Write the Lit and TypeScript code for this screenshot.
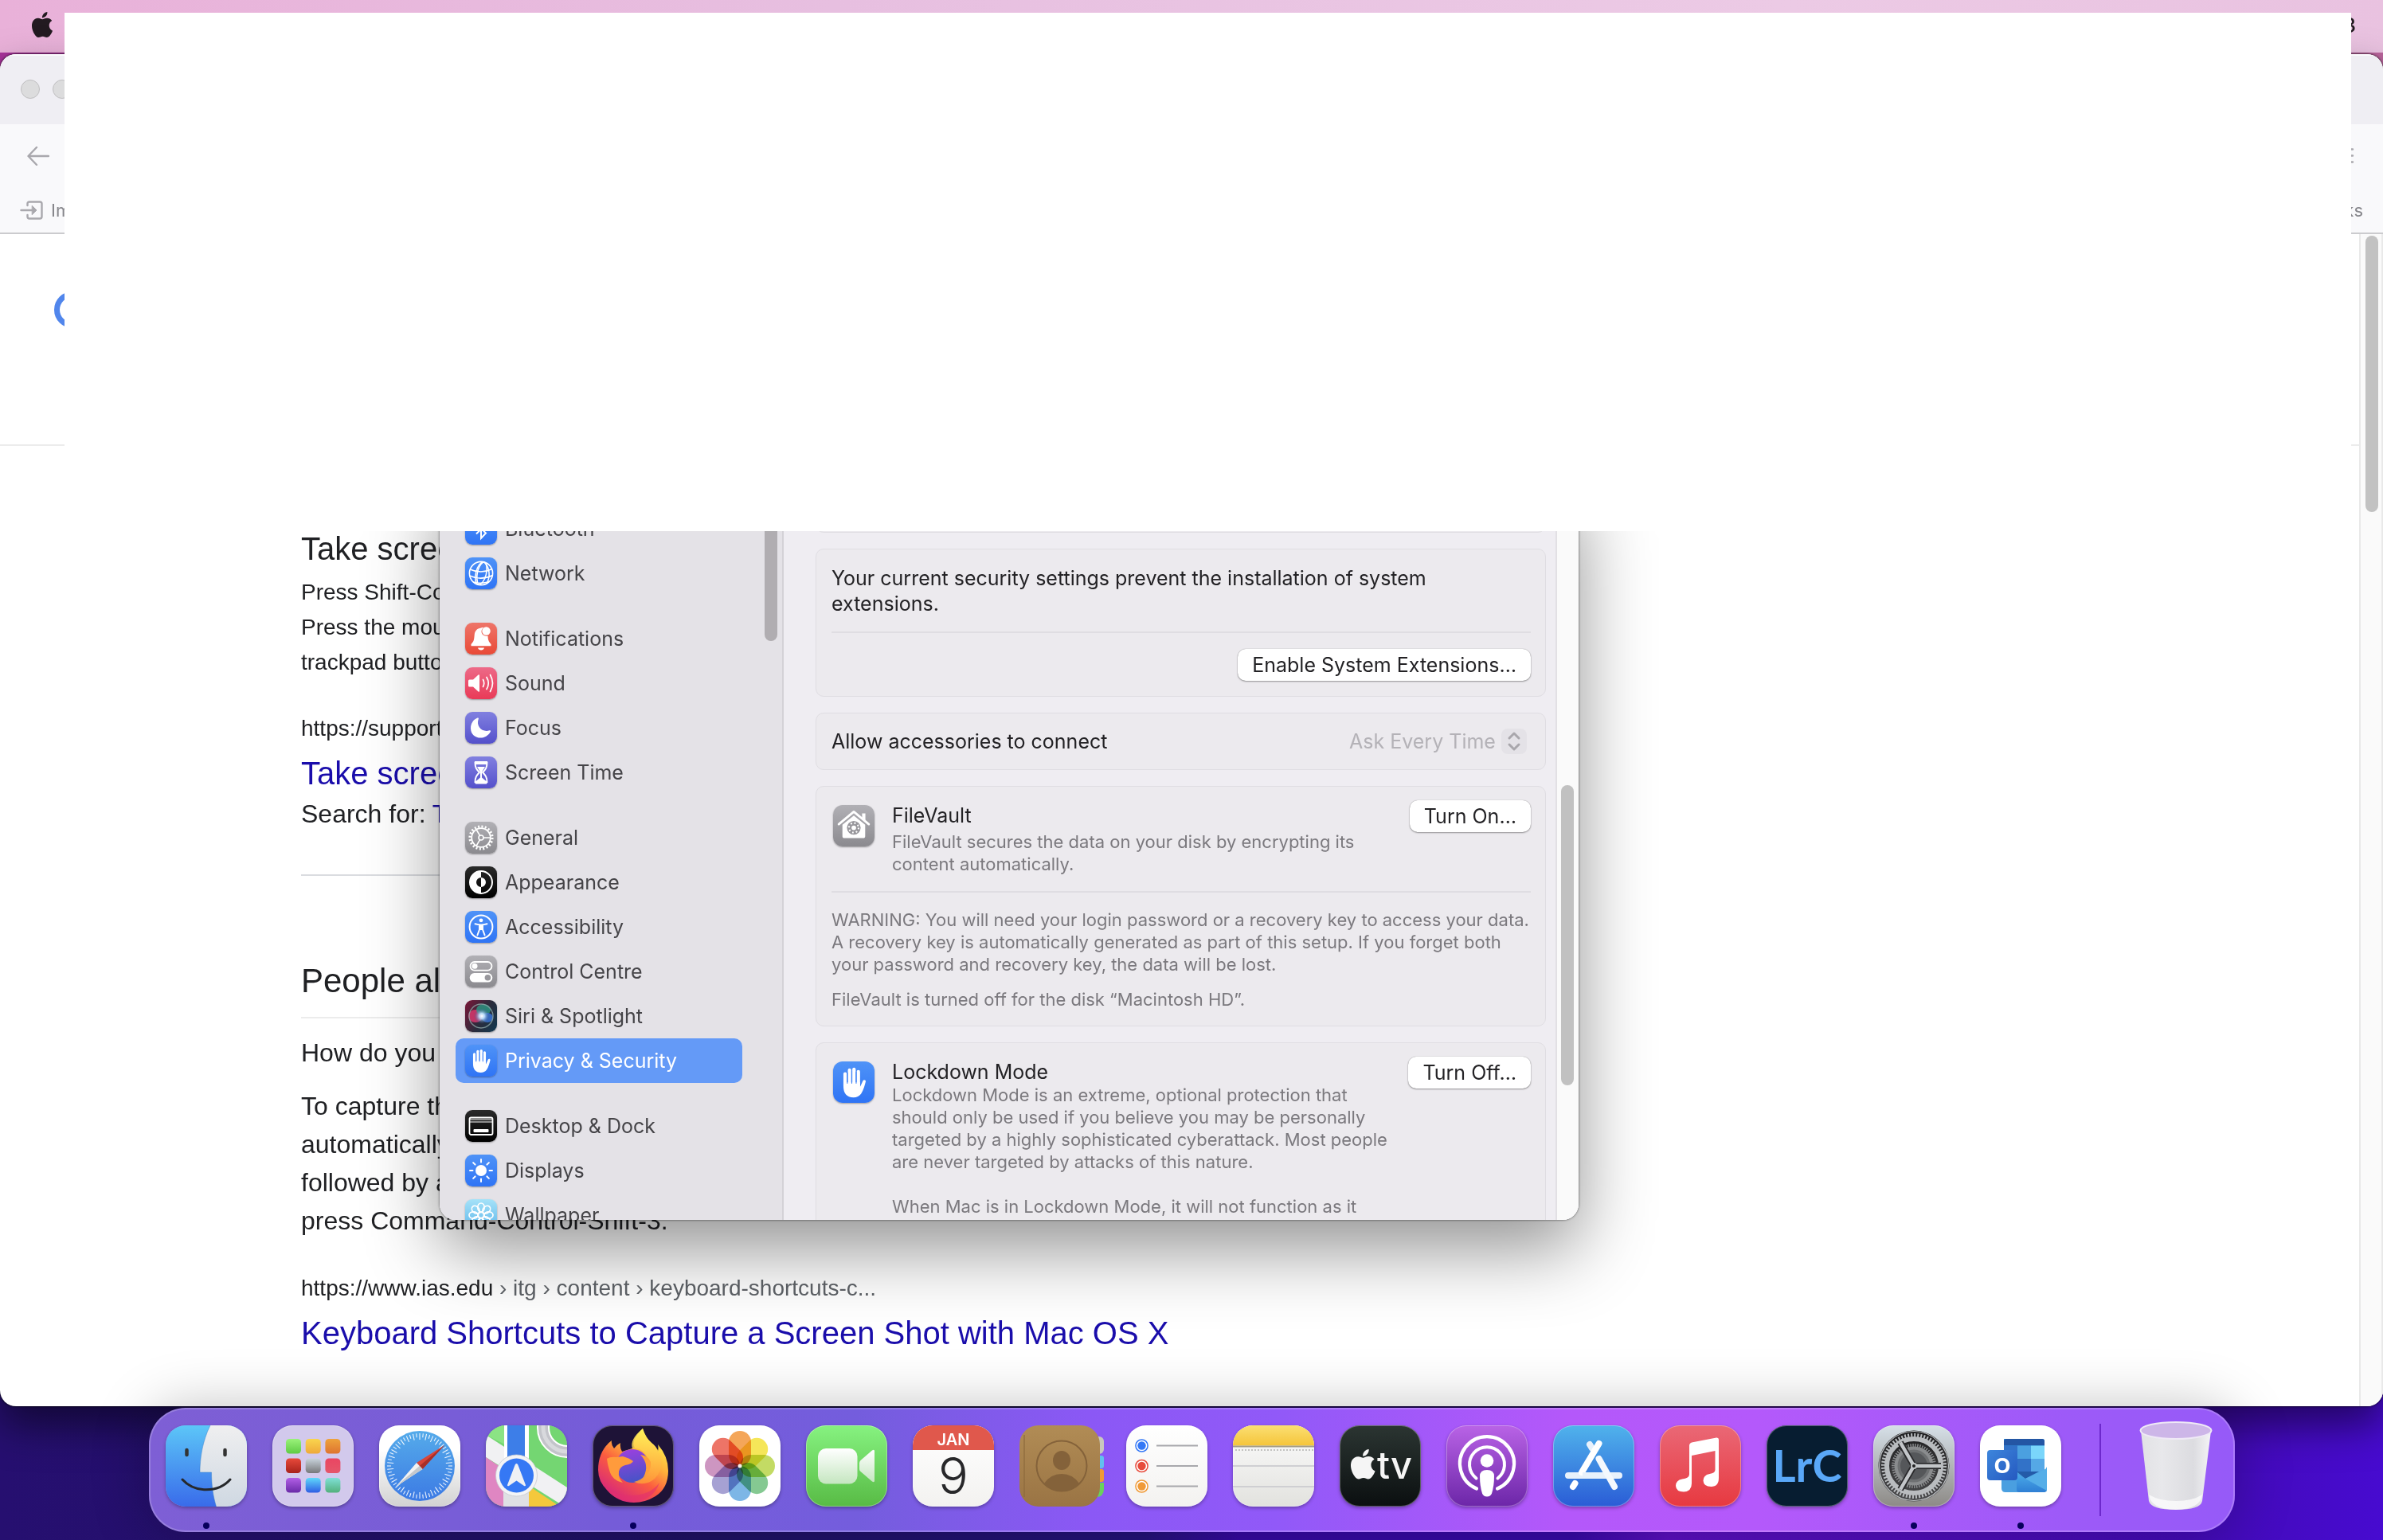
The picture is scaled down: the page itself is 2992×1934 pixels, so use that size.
import { LitElement, html, svg, css, nothing } from "lit";
import type { SVGTemplateResult } from "lit";
import { customElement } from "lit/decorators.js";
import { classMap } from "lit/directives/class-map.js";

type Art = SVGTemplateResult | SVGTemplateResult[];

const APPLE =
  "M12.152 6.896c-.948 0-2.415-1.078-3.96-1.04-2.04.027-3.91 1.183-4.961 3.014-2.117 3.675-.546 9.103 1.519 12.09 1.013 1.454 2.208 3.09 3.792 3.039 1.52-.065 2.09-.987 3.935-.987 1.831 0 2.35.987 3.96.948 1.637-.026 2.676-1.48 3.676-2.948 1.156-1.688 1.636-3.325 1.662-3.415-.039-.013-3.182-1.221-3.22-4.857-.026-3.04 2.48-4.494 2.597-4.559-1.429-2.09-3.623-2.324-4.39-2.376-2-.156-3.675 1.09-4.61 1.09zM15.53 3.83c.843-1.012 1.4-2.427 1.245-3.83-1.207.052-2.662.805-3.532 1.818-.78.896-1.454 2.338-1.273 3.714 1.338.104 2.715-.688 3.559-1.701";

const ring = (n: number) => Array.from({ length: n }, (_, i) => (i * 360) / n);

const grad = (id: string, a: string, b: string, x2 = 0, y2 = 1) => svg`
  <linearGradient id=${id} x1="0" y1="0" x2=${x2} y2=${y2}>
    <stop offset="0" stop-color=${a}></stop><stop offset="1" stop-color=${b}></stop>
  </linearGradient>`;

/* ---- settings glyphs, 40 x 40 ---- */
const hand = svg`
  <g fill="none" stroke="#fff" stroke-width="3.3" stroke-linecap="round">
    <path d="M11.6 12v12M15.9 8.4v14M20.2 7.6v14M24.4 10v14"></path>
  </g>
  <path fill="#fff" d="M10 20h16v4.600c1-1.500 1.900-4.300 2.800-6 .8-1.400 3.100-.8 2.700.9-.8 3.300-2.100 8.300-4.400 11.700-1.700 2.500-4.200 3.700-7.400 3.700-6.600 0-9.700-4.300-9.700-10.400z"></path>
  <path d="M13.750 11v10M18.050 9v12M22.300 10v11" stroke="#3f83f8" stroke-width=".9" stroke-linecap="round"></path>`;

const glyphs: Record<string, Art> = {
  bluetooth: svg`<path d="M14 13.500l12 12-6 6.500V8l6 6.500-12 12" fill="none" stroke="#fff" stroke-width="2"></path>`,
  network: svg`<g fill="none" stroke="#fff" stroke-width="1.600"><circle cx="20" cy="20" r="14.600"></circle>
    <ellipse cx="20" cy="20" rx="6.500" ry="14.600" transform="rotate(14 20 20)"></ellipse>
    <path d="M23 5.500c-8 6-10 20-6.500 29M6 15c9 4 19 4 28-.5M5.500 23c9 4 20 4 29-.5M10 31c6 1.500 14 1.500 20-.5M24 6c7 7 8 18 3 27"></path></g>`,
  bell: svg`<path fill="#fff" d="M20 6.500c1.600-.6 3-.6 3-.3-4 3-3 9 1.800 10.300 2 .5 3.700.3 3.700.3.300 5 .8 6.500 4 10.200v2.300H7.500V27c3.500-3.500 3.700-5.500 4.200-11.500.4-5 3-8.300 8.300-9z"></path>
    <circle cx="26.500" cy="10.500" r="5.200" fill="#fff"></circle><path d="M16 31.500h8c-.6 4-7.400 4-8 0z" fill="#fff"></path>`,
  sound: svg`<path fill="#fff" d="M4 17q0-1.500 1.500-1.500H10l6.500-6q1.500-1 1.500.8v19.400q0 1.800-1.500.8l-6.500-6H5.500Q4 24.500 4 23z"></path>
    <path d="M22.500 15.500q2.500 4.500 0 9M27 12.500q4.500 7.500 0 15M31.500 9.500q6 10.500 0 21" fill="none" stroke="#fff" stroke-width="1.700" stroke-linecap="round"></path>`,
  moon: svg`<path fill="#fff" d="M15.500 7.500c1-.4 1.700.3 1.300 1.200-3.500 9 4.500 17.500 13.700 14.600 1.100-.4 1.900.4 1.400 1.400C25.500 37 7 34.500 7 20.500c0-6.200 3.500-11 8.500-13z"></path>`,
  hourglass: svg`<path fill="none" stroke="#fff" stroke-width="2" stroke-linejoin="round" d="M12.500 7.500h15c0 7-2 9-5.500 12.500 3.500 3.500 5.500 6 5.500 12.500h-15c0-6.500 2-9 5.500-12.500-3.500-3.500-5.500-5.500-5.500-12.500z"></path>
    <path fill="#fff" d="M12 6h16v4H12zM15 13h10l-4 6.500v7l6 5v3H13v-3l6-5v-7z"></path>`,
  gear: svg`<g stroke="#fff" fill="none"><circle cx="20" cy="20" r="11.800" stroke-width="1.800"></circle>
    <circle cx="20" cy="20" r="14" stroke-width="3.200" stroke-dasharray="2 2.400"></circle><circle cx="20" cy="20" r="3" stroke-width="1.600"></circle>
    <path d="M23 20h9M18.500 17.400l-4.500-7.800M18.500 22.600l-4.500 7.800" stroke-width="1.700"></path></g>`,
  appearance: svg`<circle cx="20" cy="20" r="14" fill="none" stroke="#fff" stroke-width="2"></circle><path fill="#fff" d="M20 6a14 14 0 0 0 0 28v-8a6 6 0 0 1 0-12zM20 14a6 6 0 0 1 0 12z"></path>`,
  access: svg`<circle cx="20" cy="20" r="14.400" fill="none" stroke="#fff" stroke-width="2"></circle><circle cx="20" cy="11.800" r="2.400" fill="#fff"></circle>
    <path d="M12.500 16.200l5.500 1.200v6l-2.600 7M27.500 16.200L22 17.400v6l2.600 7" fill="none" stroke="#fff" stroke-width="1.900" stroke-linecap="round"></path><path fill="#fff" d="M17.500 16.500h5V24h-5z"></path>`,
  toggles: svg`<rect x="6.500" y="8" width="27" height="10.600" rx="5.300" fill="none" stroke="#fff" stroke-width="1.800"></rect><circle cx="12" cy="13.300" r="3.500" fill="#fff"></circle>
    <rect x="5.700" y="22" width="28.600" height="11.600" rx="5.800" fill="#fff"></rect><circle cx="28.400" cy="27.800" r="3.800" fill="#98979c"></circle>`,
  siri: svg`<defs><radialGradient id="siri"><stop offset="0" stop-color="#fff"></stop><stop offset=".35" stop-color="#bfe2ff" stop-opacity=".9"></stop><stop offset="1" stop-color="#2b4c8a" stop-opacity="0"></stop></radialGradient></defs>
    <ellipse cx="13" cy="20" rx="9" ry="8" fill="#d6386f" opacity=".85"></ellipse><ellipse cx="23" cy="12" rx="9" ry="7" fill="#2ca08a" opacity=".75"></ellipse><ellipse cx="28" cy="22" rx="7" ry="6" fill="#3a78e0" opacity=".8"></ellipse>
    <circle cx="21" cy="20" r="10" fill="url(#siri)"></circle><circle cx="20" cy="20" r="15" fill="none" stroke="#8fa6a8" stroke-width="1.400" opacity=".8"></circle>`,
  hand,
  dock: svg`<rect x="5.500" y="9.500" width="29" height="21.500" rx="2" fill="none" stroke="#fff" stroke-width="1.800"></rect><path d="M6 12h28M6 15h28" stroke="#fff" stroke-width="1"></path><rect x="10.500" y="24" width="19" height="4" rx="1" fill="#fff"></rect>`,
  sun: svg`<circle cx="20" cy="20" r="7" fill="#fff"></circle>${ring(8).map((a) => svg`<path d="M20 6v3.500" stroke="#fff" stroke-width="2" stroke-linecap="round" transform="rotate(${a} 20 20)"></path>`)}`,
  flower: svg`<g fill="none" stroke="#fff" stroke-width="1.700">${ring(8).map((a) => svg`<ellipse cx="20" cy="10.500" rx="4.200" ry="5.500" transform="rotate(${a} 20 20)"></ellipse>`)}<circle cx="20" cy="20" r="3.500"></circle></g>`,
  vault: svg`<path d="M5.500 18.500L20 6.500l14.500 12" fill="none" stroke="#fff" stroke-width="2.200" stroke-linejoin="round" stroke-linecap="round"></path>
    <path fill="#fff" d="M28 8h3.200v7L28 12.400zM20 10.200L31 19v11q0 2-2 2H11q-2 0-2-2V19z"></path><circle cx="20" cy="22" r="6.600" fill="#98979c"></circle>
    <circle cx="20" cy="22" r="4.600" fill="none" stroke="#fff" stroke-width="1.600" stroke-dasharray="1.400 2.200"></circle><circle cx="20" cy="22" r="2.200" fill="#fff"></circle>`,
};

const glyph = (name: string, tone: string, large = false) => html`
  <svg class=${classMap({ tile: true, large, [tone]: true })} viewBox="0 0 40 40" aria-hidden="true">${glyphs[name]}</svg>`;

interface Row { icon: string; tone: string; label: string }
const groups: Row[][] = [
  [
    { icon: "bluetooth", tone: "blue", label: "Bluetooth" },
    { icon: "network", tone: "blue", label: "Network" },
  ],
  [
    { icon: "bell", tone: "red", label: "Notifications" },
    { icon: "sound", tone: "pink", label: "Sound" },
    { icon: "moon", tone: "indigo", label: "Focus" },
    { icon: "hourglass", tone: "indigo", label: "Screen Time" },
  ],
  [
    { icon: "gear", tone: "grey", label: "General" },
    { icon: "appearance", tone: "black", label: "Appearance" },
    { icon: "access", tone: "blue", label: "Accessibility" },
    { icon: "toggles", tone: "grey", label: "Control Centre" },
    { icon: "siri", tone: "orb", label: "Siri & Spotlight" },
    { icon: "hand", tone: "blue", label: "Privacy & Security" },
  ],
  [
    { icon: "dock", tone: "black", label: "Desktop & Dock" },
    { icon: "sun", tone: "blue", label: "Displays" },
    { icon: "flower", tone: "sky", label: "Wallpaper" },
  ],
];

/* ---- dock art, 102 x 102 ---- */
const pads = [
  ["#9af27a", "#5fcb45"], ["#f9d54e", "#efa93a"], ["#eea33c", "#de7430"],
  ["#e8493a", "#a8221c"], ["#c9d3dc", "#77787a"], ["#ea4562", "#e5566a"],
  ["#b25fe6", "#6a2aa8"], ["#5fd8fb", "#2f5de4"], ["#7fe0d6", "#53b07c"],
];
const petals = ["#f2973c", "#f4e23c", "#b9d548", "#6fc07f", "#66a9e2", "#9690cc", "#c583b6", "#ea5c4c"];

const dockArt: Record<string, Art> = {
  finder: svg`<defs>${grad("fd1", "#5cc6f8", "#396bea")}${grad("fd2", "#efeff0", "#cfd8e2")}</defs>
    <path d="M0 0h102v102H0z" fill="url(#fd1)"></path><path d="M56 0C46 20 43 42 43 59h14.500c0 16 2 30 6 43H102V0z" fill="url(#fd2)"></path>
    <path d="M56 0C46 20 43 42 43 59h14.500c0 16 2 30 6 43" fill="none" stroke="#3b82c8" stroke-width=".8" opacity=".6"></path>
    <path d="M26.500 31v6M74.500 31v6" stroke="#333" stroke-width="4.500" stroke-linecap="round"></path><path d="M21 68c15 17 45 17 60 0" fill="none" stroke="#26282b" stroke-width="3" stroke-linecap="round"></path>`,
  launchpad: svg`${pads.map(([a, b], i) => svg`<defs>${grad(`lp${i}`, a, b)}</defs><rect x=${17 + (i % 3) * 24.700} y=${17 + Math.floor(i / 3) * 24.500} width="19" height="18.500" rx="4.500" fill="url(#lp${i})"></rect>`)}`,
  safari: svg`<defs>${grad("sf", "#55abea", "#3c7ae4")}</defs><circle cx="51" cy="51" r="44" fill="url(#sf)"></circle>
    ${ring(60).map((a, i) => svg`<path d=${i % 2 ? "M51 10v5" : "M51 10v8"} stroke="#fff" stroke-width="1.100" opacity=".9" transform="rotate(${a} 51 51)"></path>`)}
    <path d="M82 25L47 47l7.500 8z" fill="#d8453a"></path><path d="M82 25L50.700 51l3.800 4z" fill="#a82f28"></path><path d="M21 77l26-30 7.500 8z" fill="#f2f2f2"></path><path d="M21 77l29.700-26 3.800 4z" fill="#c4c8cc"></path>`,
  maps: svg`<path d="M0 0h102v102H0z" fill="#74d672"></path><path d="M0 0h24v24L0 12z" fill="#8be384"></path>
    <path d="M0 12L102 78v26L0 40z" fill="#f1f1f3"></path><path d="M0 40l30 20v42H0z" fill="#df86c2"></path><path d="M54 76l36 24-4 2H54z" fill="#f4c83c"></path>
    <path d="M53 0h11q2 30 38 40v35L53 44z" fill="#74d672"></path><circle cx="102" cy="3" r="30" fill="none" stroke="#fff" stroke-width="16"></circle><circle cx="102" cy="3" r="30" fill="none" stroke="#c3c4ca" stroke-width="12"></circle><circle cx="102" cy="3" r="30" fill="none" stroke="#d8d9dd" stroke-width="5"></circle>
    <path d="M23 0h31v60H23z" fill="#fff"></path><path d="M22 80h32v22H22z" fill="#dfe0e4"></path><path d="M27 0h22v60H27z" fill="#3d7ee8"></path>
    <circle cx="38.500" cy="63" r="26" fill="#f3f4f6" stroke="#c8cad0" stroke-width=".8"></circle><circle cx="38.500" cy="63" r="21.500" fill="#3578f4"></circle><path d="M38.500 48q1.200 0 1.800 1.600L50 75q0 2-2 1l-9.500-6.500L29 76q-2 1-2-1l9.700-25.400q.6-1.600 1.800-1.600z" fill="#eef0f4"></path>`,
  firefox: svg`<defs><linearGradient id="ff1" x1=".85" y1=".1" x2=".3" y2=".95"><stop offset="0" stop-color="#fff44f"></stop><stop offset=".35" stop-color="#ffb03a"></stop><stop offset=".62" stop-color="#fb5c3f"></stop><stop offset="1" stop-color="#d92a78"></stop></linearGradient>${grad("ff2", "#a03fe0", "#4b52c8", 0.2, 1)}${grad("ff3", "#fff35c", "#ff9a38")}</defs>
    <path d="M24 19q-1 5 3 10 4-5 8-7-1 6 2 11l16-5q-6-8 10-24 4 12 11 18 6 4 8 11 1-6 0-9 13 15 13 33 0 22-16 32-13 8-27 8-20 0-33-15Q7 71 7 56q0-24 17-37z" fill="url(#ff1)"></path>
    <circle cx="50" cy="51" r="21" fill="url(#ff2)"></circle><path d="M63 4Q46 18 50 29q10-1 16 6 4 6 4 12 0 20-18 24 14 6 26-4 10-10 8-26-1-9-12-19Q65 14 63 4z" fill="url(#ff3)" opacity=".85"></path>
    <path d="M60 37q12 12 4 28 10-6 9-19-3-8-13-9z" fill="#ff9f3a"></path>
    <path d="M18 42q4-3 12-2l8-1q8 2 13 6-2 4-10 5-7 2-8 8-1 8 5 14-14-3-17-16-2-6-3-14z" fill="#ff9b3c"></path><path d="M10 66q6 22 38 22 24 0 36-16-8 23-33 23-32 0-41-29z" fill="#e2306e" opacity=".6"></path>`,
  photos: svg`<g class="blend">${petals.map((c, i) => svg`<rect x="37" y="7" width="28" height="44" rx="14" fill=${c} opacity=".85" transform="rotate(${i * 45} 51 51)"></rect>`)}</g><circle cx="51" cy="51" r="2.500" fill="#f3eee8"></circle>`,
  facetime: svg`<defs>${grad("ft", "#ffffff", "#c5e6c0")}</defs><rect x="15" y="29" width="49.500" height="44.500" rx="10" fill="url(#ft)"></rect><path d="M67 47.500q0-2 1.500-3.500L83 31.500q3-2 3 1v37q0 3-3 1L68.500 58Q67 57 67 55z" fill="url(#ft)"></path>`,
  calendar: svg`<path d="M0 0h102v31H0z" fill="#e0584c"></path><text class="month" x="51" y="24.500">JAN</text><text class="day" x="51" y="86">9</text>`,
  contacts: svg`<defs>${grad("ct", "#b18c55", "#9a7444")}</defs>
    <rect x="86" y="14" width="20" height="22" rx="6" fill="#c9c8bd"></rect><rect x="86" y="38" width="20" height="16" rx="3" fill="#62c1ee"></rect><rect x="86" y="55" width="20" height="16" rx="3" fill="#f09a35"></rect><path d="M86 72h20v8q0 10-10 10H86z" fill="#6ad25c"></path>
    <rect width="101" height="102" rx="24" fill="url(#ct)"></rect><path d="M6 12v78" stroke="#8d6a3c" stroke-width="2" opacity=".6"></path>
    <circle cx="53" cy="51" r="31.500" fill="none" stroke="#84623a" stroke-width="2"></circle><ellipse cx="53" cy="44" rx="11" ry="12" fill="#84623a"></ellipse><path d="M31 73q8-12 22-12t22 12Q66 83 53 83T31 73z" fill="#84623a"></path>`,
  reminders: svg`${["#3478f6", "#e74c3c", "#f09a37"].map((c, i) => svg`<circle cx="19.500" cy=${25.500 + i * 25.500} r="7.600" fill="#fff" stroke=${c} stroke-width="1.500"></circle><circle cx="19.500" cy=${25.500 + i * 25.500} r="5.200" fill=${c}></circle><path d="M38 ${25.500 + i * 25.500}h52" stroke="#a8a8ac" stroke-width="2"></path>`)}`,
  notes: svg`<defs>${grad("nt", "#fbdf73", "#f5c53a")}</defs><path d="M0 0h102v25.500H0z" fill="url(#nt)"></path><path d="M0 26.500h102" stroke="#a39b84" stroke-width="2"></path>
    <path d="M3 31h98" stroke="#c2c2c0" stroke-width="2" stroke-dasharray="2 2"></path><path d="M0 51h102M0 77h102" stroke="#cfcfd2" stroke-width="2"></path>`,
  tv: svg`<path d=${APPLE} fill="#f5f5f5" transform="translate(10.500 30) scale(1.560)"></path><text class="tv" x="47" y="67">tv</text>`,
  podcasts: svg`<g fill="none" stroke="#fff" stroke-width="4" stroke-linecap="round"><path d="M38 79.500a34 34 0 1 1 26 0" stroke-width="4.200"></path><path d="M37.500 66.500a22 22 0 1 1 27 0"></path></g>
    <circle cx="51" cy="44.500" r="8.300" fill="#fff"></circle><path d="M42 64q0-8 9-8t9 8q0 12-3 21.500-1.500 4-6 4t-6-4Q42 76 42 64z" fill="#fff"></path>`,
  appstore: svg`<g stroke="#fff" stroke-width="8" stroke-linecap="round"><path d="M46 24l3 5M19 63h64" stroke="#e8f1fb"></path><path d="M57.500 23L36 59"></path><path d="M57.500 42L77 77" stroke="#f4f8fd"></path><path d="M27.500 73L25 77"></path></g><path d="M37 63h22" stroke="#e8f1fb" stroke-width="8"></path>`,
  music: svg`<path fill="#fff" d="M37 25.500q0-3 3-4l31-6q3-.5 3 2.500v48q0 11-9.500 11-9.500 0-10-7.500 0-7 8-8.500 7-1 7-5V32L40 38v35q0 10-10 10.500-9.500 0-10-7.500 0-7 8-8.500 9-1 9-6z"></path>`,
  lrc: svg`<text class="lrc" x="51" y="71">LrC</text>`,
  settings: svg`<defs>${grad("st", "#1d1d1f", "#4a4a4c")}</defs><circle cx="51" cy="51" r="44.500" fill="url(#st)"></circle><circle cx="51" cy="51" r="43.500" fill="none" stroke="#b9bcbf" stroke-width="1.200"></circle>
    <circle cx="51" cy="51" r="38.500" fill="none" stroke="#b9bcbf" stroke-width="5" stroke-dasharray="2 2.030"></circle><circle cx="51" cy="51" r="34" fill="none" stroke="#b9bcbf" stroke-width="6"></circle>
    <circle cx="51" cy="51" r="22" fill="#6e7072"></circle><circle cx="51" cy="51" r="26" fill="none" stroke="#8a8c8e" stroke-width="4" stroke-dasharray="1.500 1.500"></circle><circle cx="51" cy="51" r="22.500" fill="none" stroke="#8a8c8e" stroke-width="4"></circle><circle cx="51" cy="51" r="17" fill="#55575a"></circle>
    <path d="M51 51h34M51 51L34 21.500M51 51L34 80.500" stroke="#2a2a2c" stroke-width="8"></path><path d="M51 51h34M51 51L34 21.500M51 51L34 80.500" stroke="#c3c6c9" stroke-width="4.500"></path><circle cx="51" cy="51" r="4" fill="#c3c6c9"></circle><circle cx="51" cy="51" r="2" fill="#222"></circle>`,
  outlook: svg`<defs>${grad("ol1", "#3d86dc", "#2559c0", 1, 1)}${grad("ol2", "#4aa9e8", "#2f7fd4")}</defs>
    <path d="M30 17h48q3 0 3 3v30H30z" fill="#2aa0e8"></path><path d="M30 25.500V20q0-3 3-3h45q3 0 3 3v5.500z" fill="#2456a4"></path><path d="M30 25.500h17V42H30z" fill="#3272c8"></path><path d="M47 25.500h17V42H47z" fill="#4ba0e0"></path><path d="M64 25.500h17V42H64z" fill="#7ad6fb"></path><path d="M30 42h34v16H30z" fill="#3272c8"></path><path d="M64 42h17v16H64z" fill="#55a8e6"></path>
    <path d="M27 58h54l3-6v27q0 5-5 5H32q-5 0-5-5z" fill="#4a9fe0"></path><path d="M46 58h28L57 67z" fill="#245ba8"></path><path d="M84 82L46 61v20q0 3 3 3h30q4 0 5-2z" fill="url(#ol2)"></path><path d="M84 54v28L57 67z" fill="#55aee8"></path>
    <rect x="9" y="31" width="38" height="38" rx="4" fill="url(#ol1)"></rect><text class="oh" x="28" y="60">O</text>`,
};

const apps: [string, string, boolean][] = [
  ["finder", "Finder", true], ["launchpad", "Launchpad", false], ["safari", "Safari", false], ["maps", "Maps", false],
  ["firefox", "Firefox", true], ["photos", "Photos", false], ["facetime", "FaceTime", false], ["calendar", "Calendar", false],
  ["contacts", "Contacts", false], ["reminders", "Reminders", false], ["notes", "Notes", false], ["tv", "TV", false],
  ["podcasts", "Podcasts", false], ["appstore", "App Store", false], ["music", "Music", false], ["lrc", "Lightroom Classic", false],
  ["settings", "System Settings", true], ["outlook", "Outlook", true],
];

@customElement("app-root")
export class AppRoot extends LitElement {
  static styles = css`
    :host { display: block; font-family: Inter, "Liberation Sans", sans-serif; }
    * { box-sizing: border-box; }
    h2, h3, p, ul { margin: 0; padding: 0; font-size: inherit; font-weight: 400; }
    button, select { font: inherit; color: inherit; border: 0; background: none; padding: 0; margin: 0; }
    a { color: inherit; text-decoration: none; }
    svg { display: block; flex: none; }

    .desktop {
      position: relative; display: flex; flex-direction: column; height: 100vh; overflow: hidden;
      background:
        linear-gradient(90deg, #a7339a, #b9659c) top / 100% 120px no-repeat,
        linear-gradient(90deg, #260f70 0%, #1f1264 30%, #24127a 48%, #360aa2 52%, #370aa8 66%, #5c10c2 70%, #430bb6 92%, #470bd0 100%);
    }
    .menubar {
      display: flex; flex: none; align-items: center; justify-content: space-between; height: 66px; padding: 0 34px 4px 40px;
      background: linear-gradient(90deg, #e9b1d9, #e7bfe0 35%, #eccae5 75%, #e9c2e0); color: #221a20; font-size: 26px; font-weight: 500;
    }
    .apple { width: 32px; height: 32px; margin-left: -3px; }

    .browser {
      display: flex; flex: 1; flex-direction: column; min-height: 0; margin-top: 2px; overflow: hidden;
      border-radius: 20px; background: #fff; box-shadow: 0 0 3px #000, 0 24px 50px rgba(0, 0, 0, .5);
    }
    .tabs { display: flex; flex: none; align-items: center; gap: 16px; height: 88px; padding: 0 26px; background: #efeef3; box-shadow: inset 0 2px #fafafc; }
    .light { width: 24px; height: 24px; border: 1px solid #c0bfc1; border-radius: 50%; background: #dcdcdd; }
    .bar { display: flex; flex: none; align-items: center; justify-content: space-between; padding: 0 36px 0 34px; height: 80px; background: #f9f9fb; color: #a9a8ad; }
    .marks { height: 56px; padding: 0 25px; color: #85858a; font-size: 22px; }
    .mark { display: flex; align-items: center; gap: 10px; }
    .page { display: flex; flex: 1; min-height: 0; border-top: 2px solid #cbcbce; }
    .doc { flex: 1; min-width: 0; overflow: hidden; font-family: "Liberation Sans", Arial, sans-serif; color: #202124; }
    .head { height: 266px; padding: 72px 68px 0; border-bottom: 2px solid #ececec; }
    .results { display: flex; flex-direction: column; width: 1240px; padding: 105px 0 0; margin-left: 378px; }
    .title { font-size: 40px; line-height: 48px; }
    .link { color: #1a0dab; margin-top: 14px; }
    .snip { margin-top: 9px; font-size: 28px; line-height: 44px; }
    .url { margin-top: 43px; font-size: 28px; line-height: 36px; }
    .path { color: #5f6368; }
    .text { font-size: 32px; line-height: 48px; }
    .near { margin-top: 3px; }
    .near a { color: #1a0dab; }
    .rule { height: 2px; margin: 52px 0 104px; background: #dadce0; }
    .people { font-size: 42px; line-height: 56px; }
    .thin { margin: 17px 0 0; background: #ececec; }
    .ask { margin-top: 19px; }
    .track { flex: none; width: 30px; padding: 2px 4px 0 6px; border: solid #e9e9e9; border-width: 0 2px; background: #fafafa; }
    .thumb { height: 347px; border-radius: 8px; background: #c2c2c2; }

    .window, .shade { position: absolute; top: 600px; left: 552px; width: 1430px; height: 932px; border-radius: 20px; }
    .window { display: flex; overflow: hidden; background: #efedf2; color: #232225; font-size: 25px; }
    .shade { box-shadow: 0 0 3px rgba(0, 0, 0, .65), 0 36px 92px rgba(0, 0, 0, .43); }
    .side { display: flex; flex: none; width: 432px; padding-left: 20px; border-right: 2px solid #d4d2d7; background: #e4e2e7; }
    .nav { display: flex; flex: 1; flex-direction: column; gap: 26px; padding-top: 36px; color: #454448; }
    .group { list-style: none; }
    .row { display: flex; align-items: center; gap: 10px; width: 100%; height: 56px; padding: 0 12px; border-radius: 10px; line-height: 32px; }
    .row.on { background: #649af7; color: #fff; }
    .grip { width: 16px; height: 205px; margin: 0 6px 0 28px; border-radius: 0 0 8px 8px; background: #b0adb1; }
    .tile { width: 40px; height: 40px; border-radius: 9px; box-shadow: 0 1px 2px rgba(0, 0, 0, .35); }
    .large { width: 52px; height: 52px; border-radius: 12px; }
    .blue { background: linear-gradient(#4f93f7, #2f74f5); }
    .red { background: linear-gradient(#ee756a, #e94a37); }
    .pink { background: linear-gradient(#ed6a88, #e93a57); }
    .indigo { background: linear-gradient(#8180e0, #5450cb); }
    .grey { background: linear-gradient(#b1b0b5, #8b8a8f); }
    .black { background: linear-gradient(#2a2a2a, #000); }
    .sky { background: linear-gradient(#a5e2f8, #5cb4ea); }
    .orb { background: linear-gradient(120deg, #7a1538, #2a2c3c 55%, #123a52); }

    .main { display: flex; flex: 1; min-width: 0; }
    .cards { display: flex; flex: 1; flex-direction: column; gap: 20px; min-width: 0; padding: 0 12px 0 40px; }
    .card { flex: none; padding: 20px 18px 19px 19px; border: 1px solid #dfdde2; border-radius: 10px; background: #eceaee; line-height: 32px; }
    .prior { height: 69px; border-radius: 0 0 10px 10px; }
    .line { height: 2px; margin: 19px 0 20px; background: #dfdde2; }
    .end { display: flex; justify-content: flex-end; }
    .push { flex: none; height: 40px; padding: 0 18px 1px; border-radius: 10px; background: #fff; line-height: 38px; box-shadow: 0 0 1px rgba(0, 0, 0, .4), 0 1px 2px rgba(0, 0, 0, .35); }
    .slim { display: flex; align-items: center; justify-content: space-between; height: 72px; padding: 0 23px 0 19px; }
    .pick { display: flex; align-items: center; gap: 7px; color: #b4b2b7; }
    .pick select { appearance: none; opacity: 1; color: #b4b2b7; }
    .step { width: 32px; height: 32px; border-radius: 8px; background: #e4e2e7; }
    .panel { padding-top: 17px; }
    .feature { display: flex; align-items: flex-start; }
    .feature .tile { margin: 6px 22px 0 2px; }
    .info { flex: 1; min-width: 0; margin: 4px 12px 1px 0; line-height: 30px; }
    .note { color: #7b797e; font-size: 22px; line-height: 28px; }
    .spaced { margin-top: 4px; }
    .wide { margin-bottom: 16px; }
    .gap { margin-top: 28px; }
    .well { flex: none; width: 29px; padding: 386px 4px 0 5px; border-left: 2px solid #e2e0e4; background: #fafafa; }
    .well .thumb { width: 16px; height: 377px; background: #c1c1c1; }

    .dock {
      position: relative; display: flex; flex: none; align-items: flex-start; align-self: center; height: 156px; margin: 2px 0 10px; padding: 20px 26px 2px 19px;
      border: 2px solid rgba(255, 255, 255, .2); border-radius: 46px; background-origin: border-box;
      background-image: linear-gradient(90deg, #7e5fd5 0%, #755cd8 22%, #745ddd 34%, #8b58f5 45%, #9159f8 54%, #b458fa 68%, #b459fb 77%, #9d5af8 92%, #965af8 100%);
      box-shadow: 0 0 70px rgba(0, 0, 0, .25);
    }
    .apps { display: flex; gap: 32px; }
    .app { display: flex; flex-direction: column; align-items: center; gap: 20px; }
    .face { width: 102px; height: 102px; border-radius: 25px; box-shadow: 0 2px 4px rgba(0, 0, 0, .3), inset 0 0 0 1px rgba(255, 255, 255, .3); }
    .dot { width: 8px; height: 8px; border-radius: 50%; background: #08005c; }
    .split { width: 2px; height: 116px; margin: -2px 48px 0; background: #6d28cc; }
    .bin { width: 92px; height: 112px; margin-top: -5px; }
    .launchpad { background: #d2c9ec; }
    .safari { background: linear-gradient(#fff 30%, #d2d2d2); }
    .firefox { background: #1e1337; }
    .photos, .outlook { background: #fff; }
    .facetime { background: linear-gradient(#86f280, #58bb45); }
    .calendar, .reminders { background: linear-gradient(#fff, #f3f2f0); }
    .contacts { overflow: visible; box-shadow: none; }
    .notes { background: linear-gradient(#fcfcfc, #e2e2de); }
    .face.tv { background: linear-gradient(#2b3532, #0b0f10); }
    .podcasts { background: linear-gradient(#b963e6, #6c26a8); }
    .appstore { background: linear-gradient(#50b3ec, #2a5cd6); }
    .music { background: linear-gradient(#ea6876, #e73940); }
    .face.lrc { background: #071d31; }
    .settings { background: linear-gradient(#d6e0e8, #8d8a86); }
    .blend { isolation: isolate; }
    .blend rect { mix-blend-mode: multiply; }
    text { font-family: Inter, sans-serif; text-anchor: middle; }
    .month { font-size: 20px; font-weight: 600; fill: #fff; }
    .day { font-size: 63px; font-weight: 300; fill: #28282a; }
    text.tv { font-size: 47px; font-weight: 500; fill: #f5f5f5; text-anchor: start; }
    text.lrc { font-family: Lato, sans-serif; font-size: 56px; font-weight: 700; fill: #5aa8f8; }
    .oh { font-family: "Open Sans", sans-serif; font-size: 27px; font-weight: 700; fill: #fff; }

    .sheet { position: absolute; inset: 16px 40px auto 81px; height: 651px; background: #fff; }
  `;

  private menubar() {
    return html`<header class="menubar">
      <svg class="apple" viewBox="0 0 24 24" role="img" aria-label="Apple"><path d=${APPLE} fill="currentColor"></path></svg>
      <span>13:43</span>
    </header>`;
  }

  private browser() {
    return html`<section class="browser">
      <div class="tabs"><span class="light"></span><span class="light"></span></div>
      <nav class="bar">
        <svg width="28" height="24" viewBox="0 0 28 24" fill="none" stroke="currentColor" stroke-width="2.400" stroke-linecap="round" stroke-linejoin="round"><path d="M12 1L1.500 12 12 23M2 12h25"></path></svg>
        <svg width="24" height="24" viewBox="0 0 24 24" stroke="currentColor" stroke-width="2.400" stroke-linecap="round"><path d="M2 3.500h20M2 11.500h20M2 19.500h20"></path></svg>
      </nav>
      <nav class="bar marks">
        <a class="mark" href="#import"><svg width="29" height="24" viewBox="0 0 29 24" fill="none" stroke="#a9a8ad" stroke-width="2.400" stroke-linecap="round" stroke-linejoin="round"><path d="M9.500 6V4q0-2.500 2.500-2.500h13q2.500 0 2.500 2.500v16q0 2.500-2.500 2.500H12q-2.500 0-2.500-2.500v-2M1.500 12H15"></path><path d="M15.500 6.500l5.500 5.500-5.500 5.500z" fill="#a9a8ad" stroke-width="1"></path></svg>Imp</a>
        <a href="#bookmarks">marks</a>
      </nav>
      <div class="page">
        <div class="doc">
          <div class="head">
            <svg width="46" height="46" viewBox="0 0 46 46"><circle cx="23" cy="23" r="19.500" fill="none" stroke="#5186ec" stroke-width="7"></circle></svg>
          </div>
          <main class="results">
            <h3 class="title">Take scree</h3>
            <p class="snip">Press Shift-Co<br>Press the mou<br>trackpad butto</p>
            <p class="url">https://support</p>
            <h3 class="title link"><a href="#take">Take scree</a></h3>
            <p class="text near">Search for: <a href="#t">T</a></p>
            <div class="rule"></div>
            <h2 class="people">People als</h2>
            <div class="rule thin"></div>
            <p class="text ask">How do you</p>
            <p class="text ask">To capture th<br>automatically<br>followed by a<br>press Command-Control-Shift-3.</p>
            <p class="url">https://www.ias.edu<span class="path"> › itg › content › keyboard-shortcuts-c...</span></p>
            <h3 class="title link"><a href="#ias">Keyboard Shortcuts to Capture a Screen Shot with Mac OS X</a></h3>
          </main>
        </div>
        <div class="track"><div class="thumb"></div></div>
      </div>
    </section>`;
  }

  private settings() {
    return html`<div class="shade"></div><section class="window">
      <aside class="side">
        <nav class="nav">
          ${groups.map((g) => html`<ul class="group">${g.map((r) => html`<li>
            <button class=${classMap({ row: true, on: r.label === "Privacy & Security" })}>${glyph(r.icon, r.tone)}<span>${r.label}</span></button>
          </li>`)}</ul>`)}
        </nav>
        <div class="grip"></div>
      </aside>
      <div class="main">
        <div class="cards">
          <div class="card prior"></div>
          <div class="card">
            <p>Your current security settings prevent the installation of system extensions.</p>
            <div class="line"></div>
            <div class="end"><button class="push">Enable System Extensions…</button></div>
          </div>
          <div class="card slim">
            <label for="accessories">Allow accessories to connect</label>
            <span class="pick"><select id="accessories" disabled><option>Ask Every Time</option></select>
              <svg class="step" viewBox="0 0 32 32" fill="none" stroke="#a9a7ac" stroke-width="3" stroke-linecap="round" stroke-linejoin="round"><path d="M10 12l6-6 6 6M10 20l6 6 6-6"></path></svg>
            </span>
          </div>
          <div class="card panel">
            <div class="feature">
              ${glyph("vault", "grey", true)}
              <div class="info"><h3>FileVault</h3><p class="note spaced">FileVault secures the data on your disk by encrypting its content automatically.</p></div>
              <button class="push">Turn On…</button>
            </div>
            <div class="line"></div>
            <p class="note wide">WARNING: You will need your login password or a recovery key to access your data. A recovery key is automatically generated as part of this setup. If you forget both your password and recovery key, the data will be lost.</p>
            <p class="note">FileVault is turned off for the disk “Macintosh HD”.</p>
          </div>
          <div class="card panel">
            <div class="feature">
              ${glyph("hand", "blue", true)}
              <div class="info"><h3>Lockdown Mode</h3>
                <p class="note">Lockdown Mode is an extreme, optional protection that should only be used if you believe you may be personally targeted by a highly sophisticated cyberattack. Most people are never targeted by attacks of this nature.</p>
                <p class="note gap">When Mac is in Lockdown Mode, it will not function as it</p></div>
              <button class="push">Turn Off…</button>
            </div>
          </div>
        </div>
        <div class="well"><div class="thumb"></div></div>
      </div>
    </section>`;
  }

  private dock() {
    return html`<footer class="dock">
      <div class="apps">
        ${apps.map(([id, name, open]) => html`<div class="app">
          <button aria-label=${name}><svg class="face ${id}" viewBox="0 0 102 102">${dockArt[id]}</svg></button>
          ${open ? html`<span class="dot"></span>` : nothing}
        </div>`)}
      </div>
      <div class="split"></div>
      <button class="bin" aria-label="Bin"><svg viewBox="0 0 92 112" width="92" height="112">
        <defs><linearGradient id="bn" x1="0" x2="1"><stop offset="0" stop-color="#e2e2e5"></stop><stop offset=".3" stop-color="#e8e8eb"></stop><stop offset=".75" stop-color="#dcdce0"></stop><stop offset="1" stop-color="#f4f4f6"></stop></linearGradient></defs>
        <path d="M2 12l10 88q3 11 34 11t33-11l11-88z" fill="url(#bn)"></path><path d="M12 92q2 18 34 19 31-1 33-19-12 8-33 8t-34-8z" fill="#fff" opacity=".7"></path>
        <ellipse cx="46" cy="11.500" rx="44.500" ry="10.500" fill="#cdb6e8" stroke="#efe9f6" stroke-width="2"></ellipse>
      </svg></button>
    </footer>`;
  }

  render() {
    return html`<div class="desktop">
      ${this.menubar()} ${this.browser()} ${this.dock()} ${this.settings()}
      <div class="sheet"></div>
    </div>`;
  }
}
